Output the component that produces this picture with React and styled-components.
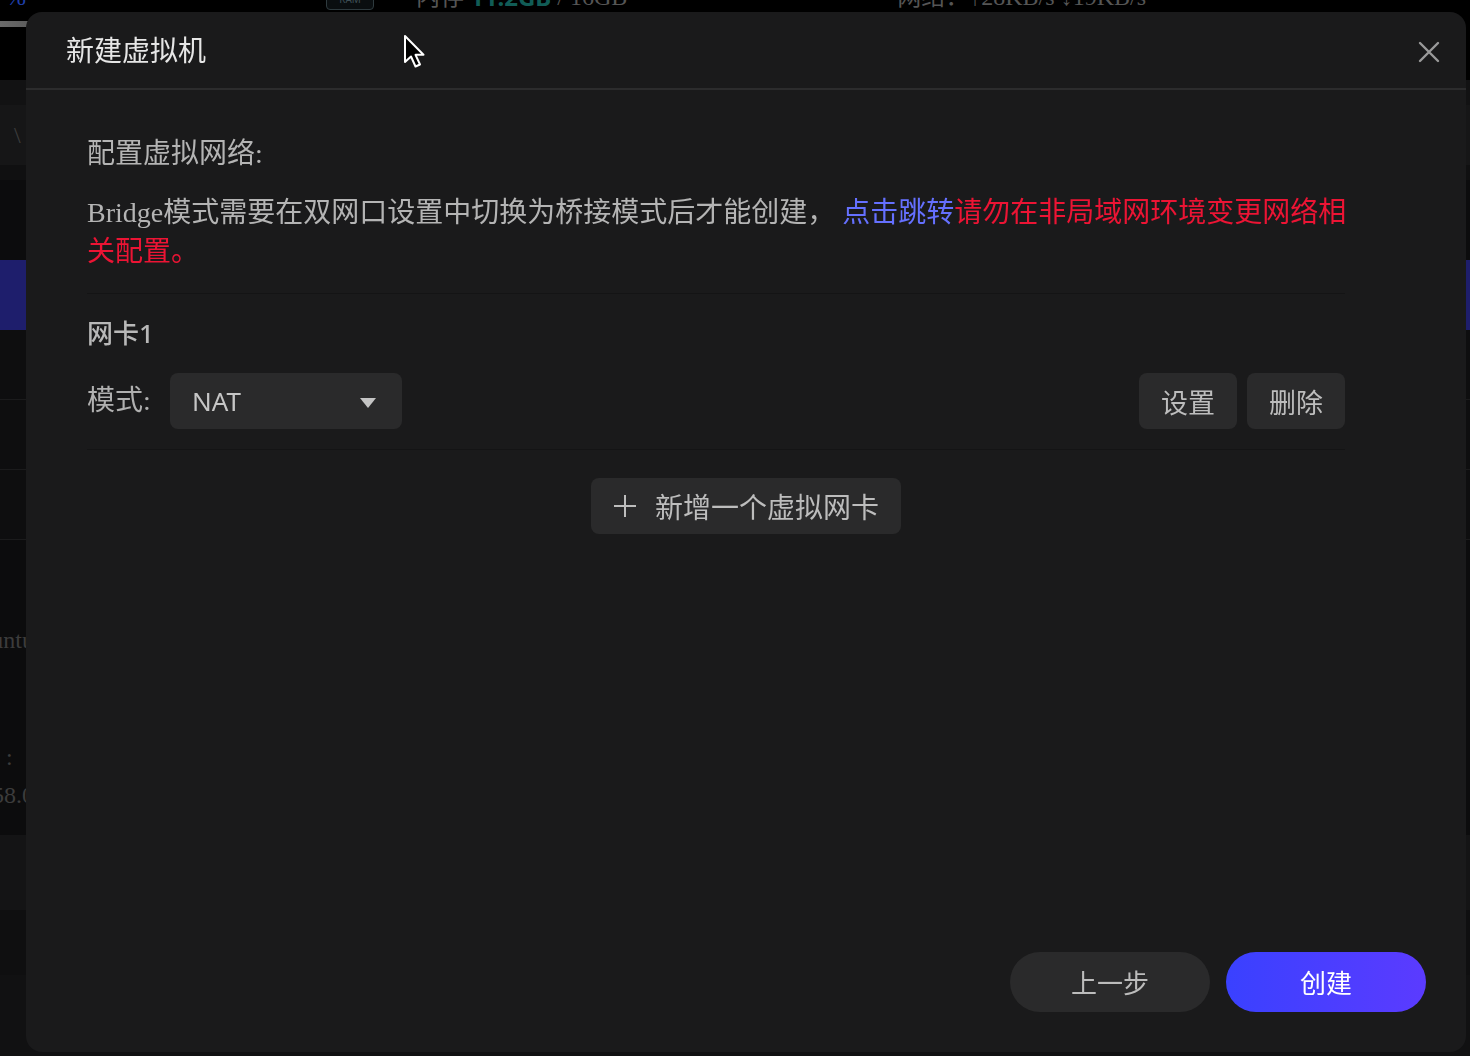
import React from "react";
import styled, { createGlobalStyle } from "styled-components";

const Global = createGlobalStyle`
  html, body { margin: 0; padding: 0; background: #0c0c0d; }
  body { font-family: "Noto Sans", "Noto Sans CJK SC", sans-serif; overflow: hidden; }
  * { box-sizing: border-box; }
`;

/* ---------- background page (dimmed, mostly hidden) ---------- */
const Page = styled.div`
  width: 1470px;
  height: 1056px;
  background: #0c0c0d;
  display: flex;
  flex-direction: column;
  overflow: hidden;
`;

const TopBar = styled.div`
  height: 20px;
  flex-shrink: 0;
  background: #000;
  display: flex;
  align-items: flex-start;
  overflow: hidden;
  font-family: "Liberation Serif", "Noto Sans CJK SC", serif;
  font-size: 24px;
  line-height: 24px;
`;

const TopItem = styled.span`
  margin-top: -15px;
  margin-left: ${(p) => p.$ml}px;
  color: ${(p) => p.$color || "#555"};
  white-space: nowrap;
  display: flex;
  align-items: center;
  gap: 6px;
`;

const RamBadge = styled.span`
  margin-top: -14px;
  margin-left: ${(p) => p.$ml}px;
  width: 48px;
  height: 24px;
  border: 1px solid #2e3a3e;
  border-radius: 4px;
  color: #3e4e55;
  font: 10px/24px "Noto Sans", sans-serif;
  text-align: center;
  background: #0a0e10;
`;

const Teal = styled.span`
  color: #115c56;
  font-family: "Noto Sans", sans-serif;
  font-weight: 700;
`;

const Progress = styled.div`
  height: 8px;
  flex-shrink: 0;
  background: #000;
  display: flex;
  align-items: center;
`;

const ProgressFill = styled.div`
  height: 6px;
  width: 70px;
  background: linear-gradient(90deg, #6a6a6a, #4a4a4a);
`;

const BgRow = styled.div`
  height: ${(p) => p.$h}px;
  flex-shrink: 0;
  background: ${(p) => p.$bg};
  border-bottom: ${(p) => (p.$line ? "1px solid #1b1b1c" : "none")};
  display: flex;
  flex-direction: column;
  justify-content: ${(p) => (p.$top ? "flex-start" : "center")};
  padding-left: 14px;
  color: #3a3a3a;
  font: 24px/1 "Liberation Serif", serif;
`;

const BgText = styled.span`
  margin-left: ${(p) => p.$ml || 0}px;
  margin-top: ${(p) => p.$mt || 0}px;
  color: #3c3c3c;
  white-space: nowrap;
`;

/* ---------- modal ---------- */
const Overlay = styled.div`
  position: fixed;
  inset: 0;
  display: flex;
  align-items: flex-start;
  justify-content: flex-start;
  padding: 12px 0 0 26px;
`;

const Modal = styled.div`
  width: 1440px;
  height: 1040px;
  background: #1a1a1b;
  border-radius: 16px;
  display: flex;
  flex-direction: column;
  overflow: hidden;
`;

const Header = styled.div`
  height: 78px;
  flex-shrink: 0;
  display: flex;
  align-items: center;
  justify-content: space-between;
  padding: 4px 26px 0 40px;
  border-bottom: 2px solid #2c2c2d;
`;

const Title = styled.h2`
  margin: 0;
  font: 400 28px/1 "Liberation Serif", "Noto Sans CJK SC", serif;
  color: #e6e6e6;
`;

const CloseBtn = styled.button`
  width: 22px;
  height: 22px;
  padding: 0;
  border: none;
  background: transparent;
  display: flex;
  align-items: center;
  justify-content: center;
  cursor: pointer;
`;

const Body = styled.div`
  flex: 1;
  display: flex;
  flex-direction: column;
  padding: 44px 121px 0 61px;
`;

const SectionLabel = styled.div`
  font: 400 28px/39px "Liberation Serif", "Noto Sans CJK SC", serif;
  color: #b4b4b4;
`;

const Notice = styled.p`
  margin: 20px -8px 0 0;
  font: 400 28px/39px "Liberation Serif", "Noto Sans CJK SC", serif;
  color: #b4b4b4;
`;

const Link = styled.span`
  color: ${(p) => (p.$tone === "blue" ? "#6570ff" : "#ec1434")};
`;

const Divider = styled.div`
  height: 1px;
  background: #141415;
  margin-top: ${(p) => p.$mt}px;
`;

const NicTitle = styled.div`
  margin-top: 21px;
  font: 500 26px/36px "Noto Sans", "Noto Sans CJK SC", sans-serif;
  color: #b8b8b8;
`;

const NicRow = styled.div`
  margin-top: 22px;
  height: 56px;
  display: flex;
  align-items: center;
`;

const FieldLabel = styled.span`
  width: 83px;
  flex-shrink: 0;
  font: 400 28px/1 "Liberation Serif", "Noto Sans CJK SC", serif;
  color: #b0b0b0;
`;

const Select = styled.div`
  width: 232px;
  height: 56px;
  border-radius: 8px;
  background: #2a2a2b;
  display: flex;
  align-items: center;
  justify-content: space-between;
  padding: 0 26px 0 22px;
  font: 400 26px/1 "Noto Sans", "Noto Sans CJK SC", sans-serif;
  color: #c6c6c6;
`;

const Caret = styled.span`
  width: 0;
  height: 0;
  margin-top: 4px;
  border-left: 8px solid transparent;
  border-right: 8px solid transparent;
  border-top: 10px solid #c4c4c4;
`;

const Actions = styled.div`
  margin-left: auto;
  display: flex;
  gap: 10px;
`;

const GhostBtn = styled.button`
  height: 56px;
  padding: 0 22px;
  border: none;
  border-radius: 8px;
  background: #2a2a2b;
  color: #bdbdbd;
  font: 400 ${(p) => p.$fs || 27}px/1 "Noto Sans CJK SC", sans-serif;
  display: flex;
  align-items: center;
  gap: 18px;
  cursor: pointer;
`;

const AddRow = styled.div`
  margin-top: 28px;
  padding-left: 60px;
  display: flex;
  justify-content: center;
`;

const Footer = styled.div`
  flex-shrink: 0;
  display: flex;
  justify-content: flex-end;
  gap: 16px;
  padding: 0 40px 40px;
`;

const PillBtn = styled.button`
  width: 200px;
  height: 60px;
  border: none;
  border-radius: 30px;
  font: 400 26px/1 "Noto Sans CJK SC", sans-serif;
  cursor: pointer;
  color: ${(p) => (p.$primary ? "#ffffff" : "#bcbcbc")};
  background: ${(p) =>
    p.$primary ? "linear-gradient(90deg, #3a41ff 0%, #5b3bff 100%)" : "#2a2a2b"};
`;

const Cursor = styled.svg`
  position: fixed;
  left: 403px;
  top: 34px;
  pointer-events: none;
`;

export default function App() {
  return (
    <>
      <Global />
      <Page>
        <TopBar>
          <TopItem $ml={6} $color="#1f3fa8">%</TopItem>
          <RamBadge $ml={300}>RAM</RamBadge>
          <TopItem $ml={42}>
            内存 <Teal>11.2GB</Teal> / 16GB
          </TopItem>
          <TopItem $ml={270}>网络：↑28KB/s ↓19KB/s</TopItem>
        </TopBar>
        <Progress>
          <ProgressFill />
        </Progress>
        <BgRow $h={52} $bg="#000" />
        <BgRow $h={25} $bg="#121213" />
        <BgRow $h={60} $bg="#161617">
          <BgText $ml={0}>\</BgText>
        </BgRow>
        <BgRow $h={15} $bg="#101011" />
        <BgRow $h={80} $bg="#0c0c0d" />
        <BgRow $h={70} $bg="#1e1e6c" />
        <BgRow $h={70} $bg="#0e0e0f" $line />
        <BgRow $h={70} $bg="#0e0e0f" $line />
        <BgRow $h={70} $bg="#0e0e0f" $line />
        <BgRow $h={295} $bg="#0c0c0d" $top>
          <BgText $ml={-52} $mt={88}>Ubuntu</BgText>
          <BgText $ml={-8} $mt={93}>:</BgText>
          <BgText $ml={-22} $mt={14}>58.0</BgText>
        </BgRow>
        <BgRow $h={75} $bg="#141415" />
        <BgRow $h={65} $bg="#0f0f10" />
        <BgRow $h={81} $bg="#111112" />
      </Page>

      <Overlay>
        <Modal>
          <Header>
            <Title>新建虚拟机</Title>
            <CloseBtn aria-label="close">
              <svg width="22" height="22" viewBox="0 0 22 22">
                <path d="M2 2 L20 20 M20 2 L2 20" stroke="#9a9a9a" strokeWidth="2.4" strokeLinecap="round" />
              </svg>
            </CloseBtn>
          </Header>
          <Body>
            <SectionLabel>配置虚拟网络:</SectionLabel>
            <Notice>
              Bridge模式需要在双网口设置中切换为桥接模式后才能创建，{" "}
              <Link $tone="blue">点击跳转</Link>
              <Link $tone="red">请勿在非局域网环境变更网络相关配置。</Link>
            </Notice>
            <Divider $mt={22} />
            <NicTitle>网卡1</NicTitle>
            <NicRow>
              <FieldLabel>模式:</FieldLabel>
              <Select>
                NAT
                <Caret />
              </Select>
              <Actions>
                <GhostBtn>设置</GhostBtn>
                <GhostBtn>删除</GhostBtn>
              </Actions>
            </NicRow>
            <Divider $mt={20} />
            <AddRow>
              <GhostBtn $fs={28}>
                <svg width="24" height="24" viewBox="0 0 24 24">
                  <path d="M12 1 V23 M1 12 H23" stroke="#bdbdbd" strokeWidth="2" />
                </svg>
                新增一个虚拟网卡
              </GhostBtn>
            </AddRow>
          </Body>
          <Footer>
            <PillBtn>上一步</PillBtn>
            <PillBtn $primary>创建</PillBtn>
          </Footer>
        </Modal>
      </Overlay>

      <Cursor width="26" height="36" viewBox="0 0 26 36">
        <path
          d="M2 2 L2 28 L8 22.5 L12.5 32.5 L17 30.5 L12.5 20.8 L20.5 20.8 Z"
          fill="#000"
          stroke="#fff"
          strokeWidth="2"
          strokeLinejoin="round"
        />
      </Cursor>
    </>
  );
}
